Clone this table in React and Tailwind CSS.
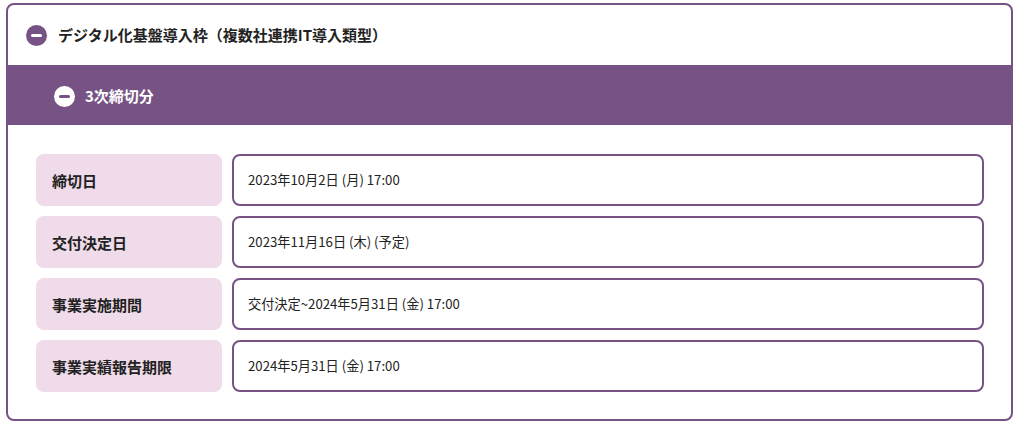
import React from "react";

const rows = [
    { label: "締切日", value: "2023年10月2日 (月) 17:00" },
    { label: "交付決定日", value: "2023年11月16日 (木) (予定)" },
    { label: "事業実施期間", value: "交付決定~2024年5月31日 (金) 17:00" },
    { label: "事業実績報告期限", value: "2024年5月31日 (金) 17:00" },
];

function MinusIcon({ light }) {
    return (
        <span
            className={`flex h-[21px] w-[21px] shrink-0 items-center justify-center rounded-full ${
                light ? "bg-white" : "bg-[#775385]"
            }`}
        >
            <span
                className={`block h-[3px] w-[11px] rounded-full ${
                    light ? "bg-[#775385]" : "bg-white"
                }`}
            />
        </span>
    );
}

export default function App() {
    return (
        <div
            className="bg-white pt-[3px] pl-[6px] pr-[11px] pb-[7px] text-[#222]"
            style={{ fontFamily: '"Noto Sans CJK JP", "Noto Sans", sans-serif' }}
        >
            <div className="overflow-hidden rounded-[8px] border-2 border-[#775385] bg-white">
                <div className="flex h-[60px] items-center gap-[11px] pl-[18px] pt-[1px]">
                    <MinusIcon />
                    <h2 className="text-[15px] font-bold">
                        デジタル化基盤導入枠（複数社連携IT導入類型）
                    </h2>
                </div>
                <div className="flex h-[60px] items-center gap-[10px] bg-[#775385] pl-[46px] pt-[2px]">
                    <MinusIcon light />
                    <h3 className="text-[15px] font-bold text-white">3次締切分</h3>
                </div>
                <div className="flex flex-col gap-[10px] pt-[29px] pb-[27px] pl-[28px] pr-[27px]">
                    {rows.map((row) => (
                        <div key={row.label} className="flex h-[52px] gap-[10px]">
                            <div className="flex w-[186px] shrink-0 items-center rounded-[8px] bg-[#efdbe9] px-4 pt-[3px] text-[15px] font-bold">
                                {row.label}
                            </div>
                            <div className="flex flex-1 items-center rounded-[8px] border-2 border-[#775385] px-[14px] text-[13.2px]">
                                {row.value}
                            </div>
                        </div>
                    ))}
                </div>
            </div>
        </div>
    );
}
